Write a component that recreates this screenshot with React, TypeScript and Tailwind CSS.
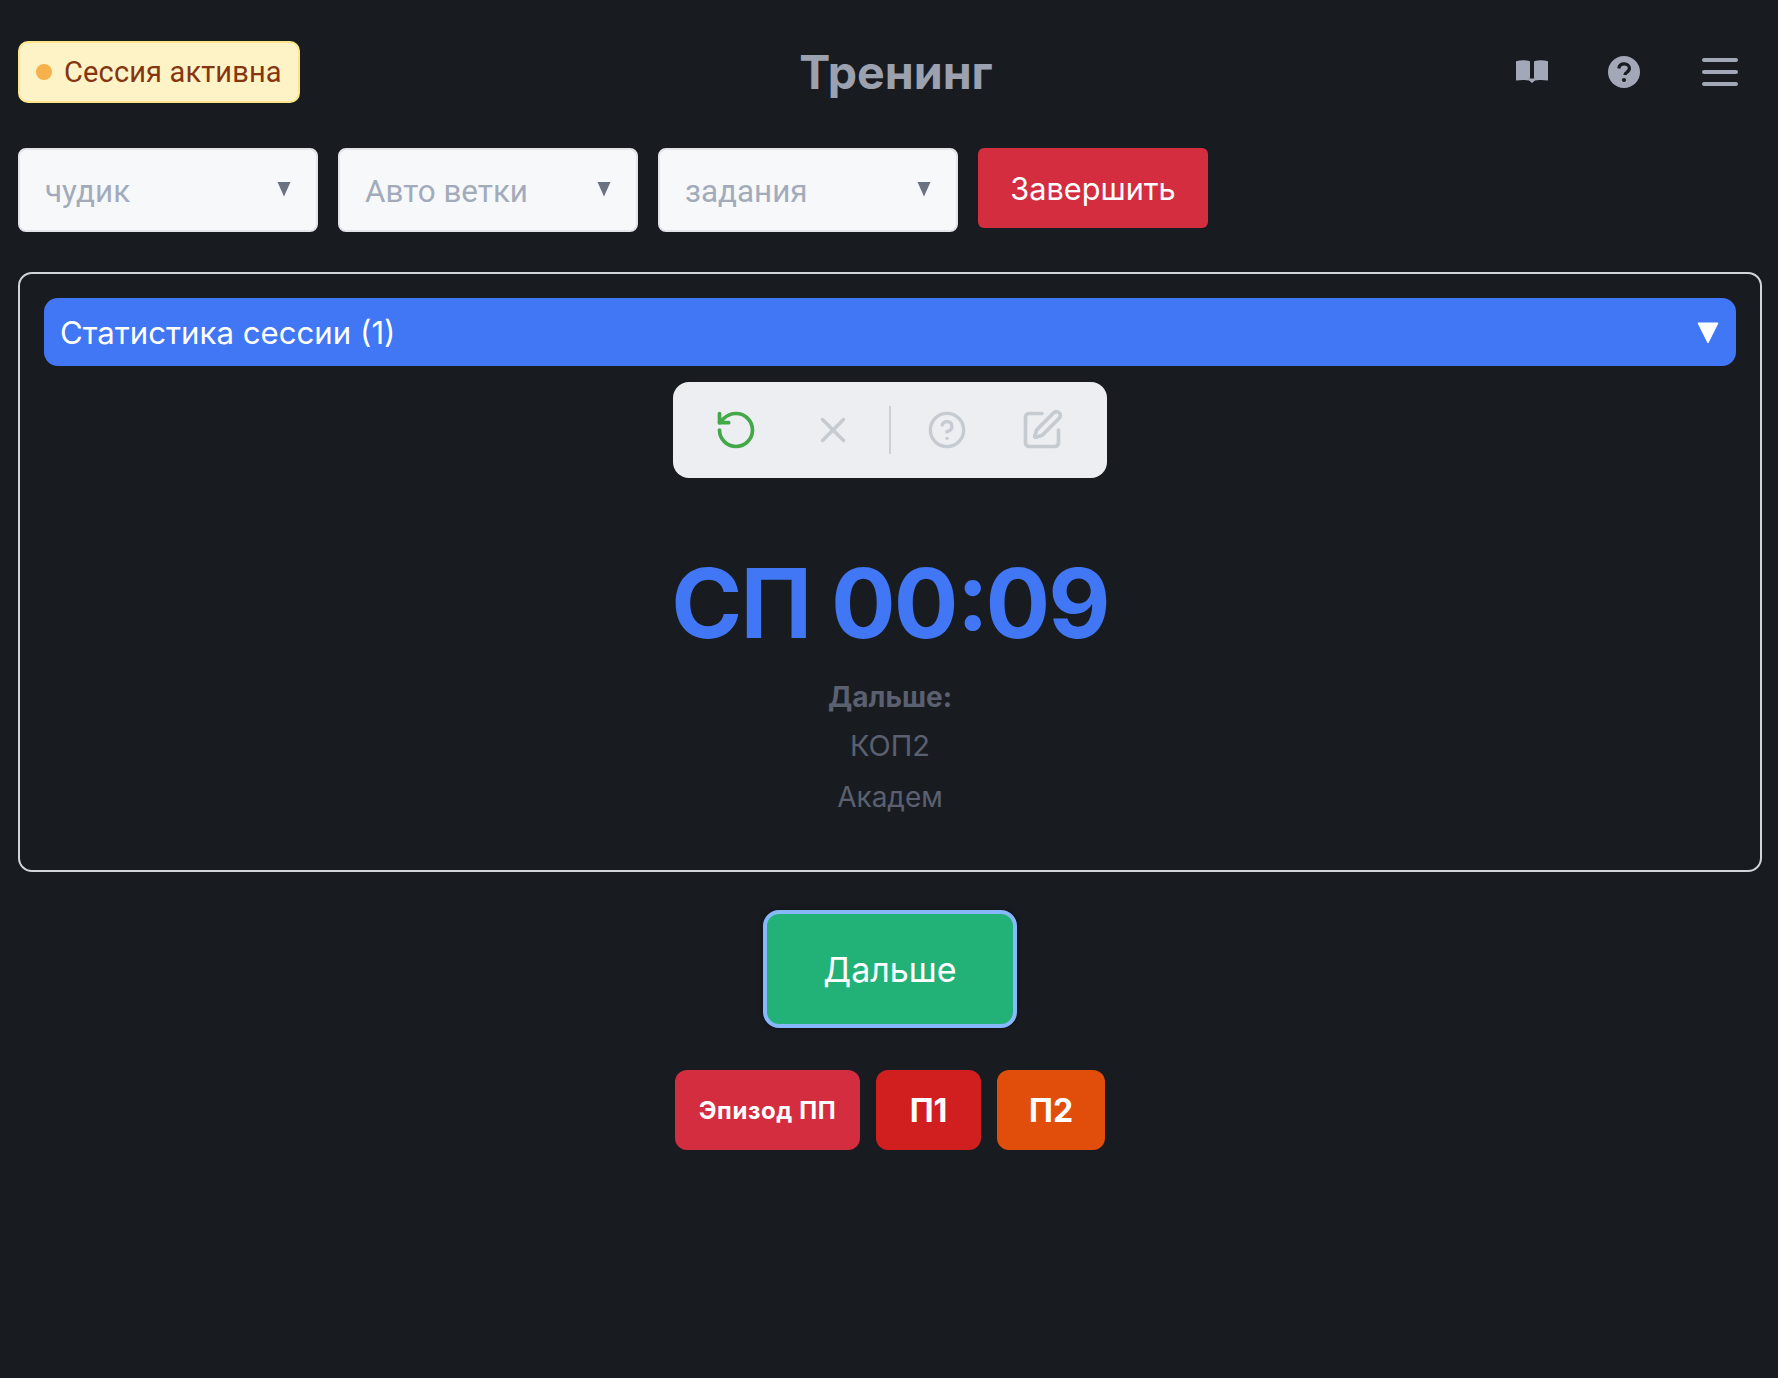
import { RotateCcw, X, CircleHelp, SquarePen } from "lucide-react";

const inter = "font-['Inter',sans-serif]";

function FakeSelect({ label }: { label: string }) {
  return (
    <div className="flex h-[84px] w-[300px] items-center justify-between rounded-[8px] border-2 border-[#e2e5ea] bg-[#f6f8fa] pl-[25px] pr-[25px]">
      <span className="pt-[4px] font-['Roboto',sans-serif] text-[31.4px] text-[#a3abba]">{label}</span>
      <svg viewBox="0 0 14 16" className="mb-[3px] h-[16px] w-[14px]">
        <path d="M0.5 1h13L7 15.5z" fill="#6b7280" />
      </svg>
    </div>
  );
}

function HeaderIcons() {
  return (
    <div className="flex items-center">
      <svg viewBox="0 0 32 23" className="mb-[2px] h-[23px] w-[32px] text-[#a3a8b8]" fill="currentColor">
        <path d="M0 1.2C4.500 -.2 9.500 -.2 14 1.200V18.800C9.500 17.800 4.500 17.800 0 18.800Z" />
        <path d="M18 1.200C22.500 -.2 27.500 -.2 32 1.200V18.800C27.500 17.800 22.500 17.800 18 18.800Z" />
        <path d="M0 18C6 17 12 17.500 14 18.500H18C20 17.500 26 17 32 18V20.500C27 19.600 22 19.800 19 20.500L16 23L13 20.500C10 19.800 5 19.600 0 20.500Z" />
      </svg>
      <svg viewBox="0 0 32 32" className="ml-[60px] h-[32px] w-[32px]">
        <circle cx="16" cy="16" r="16" fill="#a3a8b8" />
        <path d="M10.800 12.500c.4-3 2.600-4.600 5.400-4.600 3 0 5.200 1.800 5.200 4.400 0 2-1.100 3-2.600 4-1.300.8-1.800 1.400-1.800 2.800" fill="none" stroke="#181c21" strokeWidth="3.200" />
        <circle cx="16" cy="24" r="2.100" fill="#181c21" />
      </svg>
      <div className="ml-[62px] flex w-[36px] flex-col gap-[8px]">
        <div className="h-[4px] rounded-full bg-[#a3a8b8]" />
        <div className="h-[4px] rounded-full bg-[#a3a8b8]" />
        <div className="h-[4px] rounded-full bg-[#a3a8b8]" />
      </div>
    </div>
  );
}

export default function App() {
  return (
    <div className={`min-h-[1378px] bg-[#181c21] pl-[18px] pr-[16px] pt-[41px] ${inter}`}>
      <header className="flex h-[62px] items-center justify-between pr-[24px]">
        <div className="flex h-[62px] w-[282px] items-center rounded-[10px] border-2 border-[#fde68a] bg-[#fef3c7] pl-[16px]">
          <span className="h-[16px] w-[16px] rounded-full bg-[#f6b14b]" />
          <span className="ml-[12px] pt-[2px] font-['Roboto',sans-serif] text-[29px] tracking-[0.15px] text-[#85350f]">Сессия активна</span>
        </div>
        <h1 className="ml-[-24px] pt-[2px] text-[46.500px] font-bold text-[#9ca1b0]">Тренинг</h1>
        <HeaderIcons />
      </header>

      <div className="mt-[45px] flex items-start gap-[20px]">
        <FakeSelect label="чудик" />
        <FakeSelect label="Авто ветки" />
        <FakeSelect label="задания" />
        <button className="h-[80px] w-[230px] rounded-[6px] bg-[#d32d3f] pt-[2px] text-[30.700px] text-white">Завершить</button>
      </div>

      <section className="mt-[40px] flex h-[600px] flex-col items-center rounded-[14px] border-2 border-[#d1d5db] px-[24px] pt-[24px]">
        <div className="flex h-[68px] w-full items-center justify-between rounded-[14px] bg-[#4176f5] pl-[16px] pr-[17px]">
          <span className="pt-[2px] text-[31.200px] text-white">Статистика сессии (1)</span>
          <svg viewBox="0 0 22 22" className="mt-[2px] h-[22px] w-[22px]">
            <path d="M1 1h20L11 21z" fill="#fff" stroke="#fff" strokeLinejoin="round" />
          </svg>
        </div>

        <div className="mt-[16px] flex h-[96px] w-[434px] items-center rounded-[16px] bg-[#eceef2] pl-[41px]">
          <RotateCcw className="h-[44px] w-[44px] text-[#43a948]" strokeWidth={2} />
          <X className="ml-[54px] h-[42px] w-[42px] text-[#c6cad1]" strokeWidth={2} />
          <div className="ml-[35px] h-[48px] w-[2px] bg-[#cdd0d7]" />
          <CircleHelp className="ml-[36px] h-[40px] w-[40px] text-[#c6cad1]" strokeWidth={2} />
          <SquarePen className="ml-[53px] h-[44px] w-[44px] text-[#c6cad1]" strokeWidth={2} />
        </div>

        <div className="mt-[67px] text-[96px] font-bold leading-[116px] tracking-[-0.02em] text-[#4176f5]">
          СП 00<span className="inline-block -translate-y-[8px] tracking-[-3.300px]">:</span>09
        </div>
        <div className="mt-[18px] text-[28px] font-bold leading-[36px] text-[#5b6070]">Дальше:</div>
        <div className="mt-[13px] text-[29px] leading-[36px] text-[#5b6070]">КОП2</div>
        <div className="mt-[15px] text-[28px] leading-[36px] text-[#5b6070]">Академ</div>
      </section>

      <div className="mt-[38px] flex justify-center">
        <button className="h-[118px] w-[254px] rounded-[16px] border-4 border-[#87b8fb] bg-[#22b277] text-[34px] text-white shadow-[0_0_4px_rgba(0,0,0,0.5)]">Дальше</button>
      </div>

      <div className="mt-[42px] flex justify-center gap-[16px]">
        <button className="h-[80px] w-[185px] rounded-[12px] bg-[#d32d3f] pt-[2px] text-[24px] font-bold tracking-[0.6px] text-white">Эпизод ПП</button>
        <button className="h-[80px] w-[105px] rounded-[12px] bg-[#d11f20] pt-[2px] text-[32px] font-bold text-white">П1</button>
        <button className="h-[80px] w-[108px] rounded-[12px] bg-[#e14d0a] pt-[2px] text-[32px] font-bold text-white">П2</button>
      </div>
    </div>
  );
}
